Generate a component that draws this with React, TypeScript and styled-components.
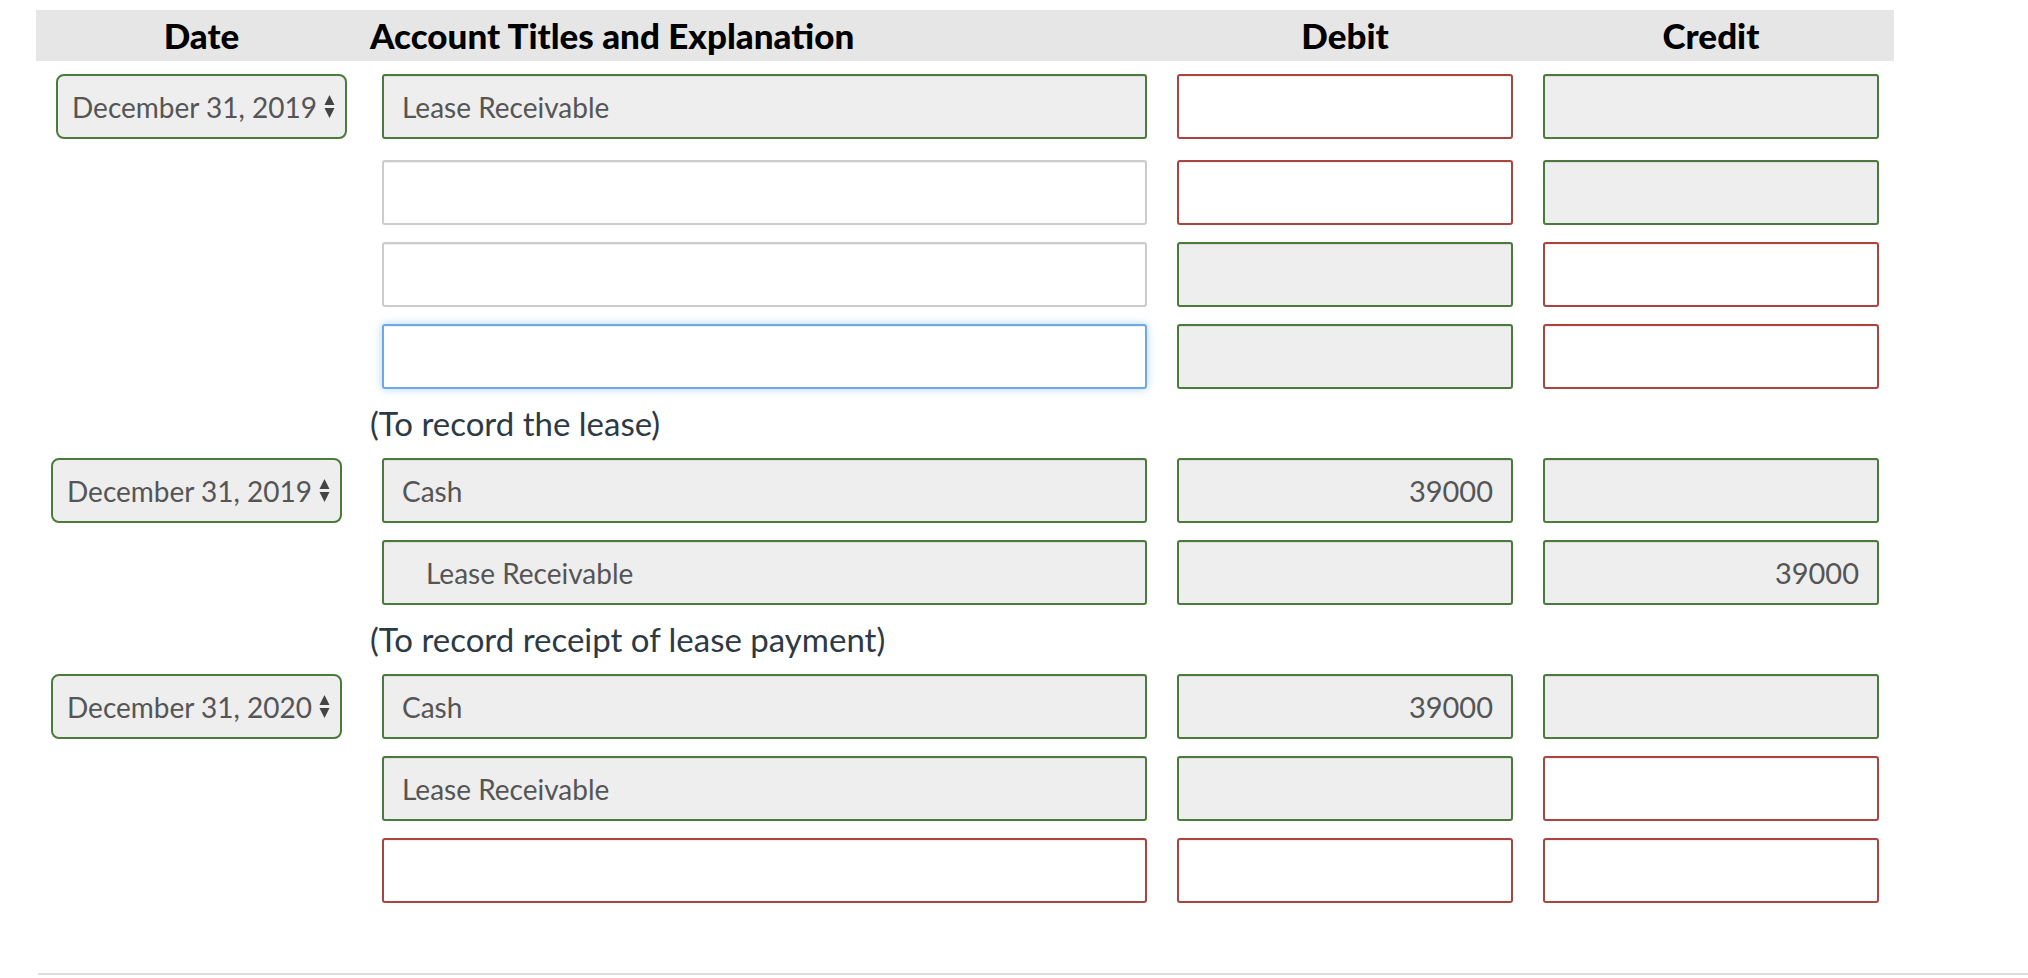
import React from 'react';
import styled, { createGlobalStyle, css } from 'styled-components';

// Journal entry worksheet: a grey header band, then entries made of rows of
// account / debit / credit fields, each marked by its check state.

type State = 'ok' | 'bad' | 'plain' | 'focus';

interface Line {
  account?: string;
  indent?: boolean;
  acct: State;
  debit: State;
  credit: State;
  debitValue?: string;
  creditValue?: string;
}

interface Entry {
  date: string;
  shift: number;
  lines: Line[];
  note?: string;
}

const GlobalStyle = createGlobalStyle`
  html, body {
    margin: 0;
    padding: 0;
    background: #ffffff;
  }
  body {
    font-family: Lato, "Open Sans", "Liberation Sans", sans-serif;
  }
`;

const Page = styled.div`
  padding: 10px 0 0 36px;
`;

const columns = css`
  display: grid;
  grid-template-columns: 316px 765px 336px 336px;
  column-gap: 30px;
`;

const HeaderBar = styled.div`
  ${columns};
  width: 1843px;
  padding-right: 15px;
  height: 51px;
  background: #e6e6e6;
  align-items: center;
`;

const HeadCell = styled.div<{ $align?: 'left' | 'center' }>`
  font-size: 35px;
  font-weight: 900;
  line-height: 51px;
  color: #000;
  white-space: nowrap;
  text-align: ${(p) => p.$align ?? 'center'};
  ${(p) =>
    p.$align === 'left'
      ? css`
          margin-left: -12px;
        `
      : ''}
`;

const DateHead = styled(HeadCell)`
  padding: 0 0 0 20px;
  width: 291px;
`;

const Body = styled.div`
  padding-top: 13px;
`;

const Row = styled.div<{ $extra?: number }>`
  ${columns};
  height: 65px;
  margin-bottom: ${(p) => 17 + (p.$extra ?? 0)}px;
`;

const Note = styled.div`
  ${columns};
  height: 52px;
`;

const NoteText = styled.div`
  grid-column: 2 / span 3;
  margin-left: -12px;
  font-size: 33px;
  line-height: 34px;
  color: #2d3a45;
`;

const stateStyle = {
  ok: css`
    border-color: #4a7b3d;
    background: #eeeeee;
  `,
  bad: css`
    border-color: #a9443f;
    background: #ffffff;
  `,
  plain: css`
    border-color: #cccccc;
    background: #ffffff;
  `,
  focus: css`
    border-color: #6ea8e5;
    background: #ffffff;
    box-shadow: inset 0 1px 1px rgba(0, 0, 0, 0.075), 0 0 9px rgba(102, 175, 233, 0.55);
  `,
};

const Field = styled.input<{ $state: State; $indent?: boolean; $num?: boolean }>`
  box-sizing: border-box;
  width: 100%;
  height: 65px;
  margin: 0;
  border: 2px solid;
  border-radius: 3px;
  outline: none;
  box-shadow: inset 0 1px 1px rgba(0, 0, 0, 0.075);
  padding: 0 ${(p) => (p.$num ? '18px' : '12px')} 0 ${(p) => (p.$indent ? '42px' : '18px')};
  font-family: Lato, "Open Sans", "Liberation Sans", sans-serif;
  font-size: ${(p) => (p.$num ? '29px' : '28px')};
  color: #555555;
  text-align: ${(p) => (p.$num ? 'right' : 'left')};
  ${(p) => stateStyle[p.$state]};
`;

const SelectBox = styled.div<{ $shift: number }>`
  box-sizing: border-box;
  width: 291px;
  height: 65px;
  margin-left: ${(p) => p.$shift}px;
  display: flex;
  align-items: center;
  justify-content: space-between;
  padding: 0 10px 0 14px;
  border: 2px solid #4a7b3d;
  border-radius: 8px;
  background: #eeeeee;
  font-size: 28px;
  color: #555555;
`;

const Arrows = () => (
  <svg width="11" height="25" viewBox="0 0 11 25" aria-hidden="true">
    <path d="M5.5 1 L10.5 11 L0.5 11 Z" fill="#444" />
    <path d="M0.5 14 L10.5 14 L5.5 24 Z" fill="#444" />
  </svg>
);

const Divider = styled.div`
  margin: 70px 0 0 2px;
  height: 2px;
  background: #dddddd;
`;

const entries: Entry[] = [
  {
    date: 'December 31, 2019',
    shift: 20,
    note: '(To record the lease)',
    lines: [
      { account: 'Lease Receivable', acct: 'ok', debit: 'bad', credit: 'ok' },
      { acct: 'plain', debit: 'bad', credit: 'ok' },
      { acct: 'plain', debit: 'ok', credit: 'bad' },
      { acct: 'focus', debit: 'ok', credit: 'bad' },
    ],
  },
  {
    date: 'December 31, 2019',
    shift: 15,
    note: '(To record receipt of lease payment)',
    lines: [
      { account: 'Cash', acct: 'ok', debit: 'ok', credit: 'ok', debitValue: '39000' },
      {
        account: 'Lease Receivable',
        indent: true,
        acct: 'ok',
        debit: 'ok',
        credit: 'ok',
        creditValue: '39000',
      },
    ],
  },
  {
    date: 'December 31, 2020',
    shift: 15,
    lines: [
      { account: 'Cash', acct: 'ok', debit: 'ok', credit: 'ok', debitValue: '39000' },
      { account: 'Lease Receivable', acct: 'ok', debit: 'ok', credit: 'bad' },
      { acct: 'bad', debit: 'bad', credit: 'bad' },
    ],
  },
];

const App: React.FC = () => (
  <>
    <GlobalStyle />
    <Page>
      <HeaderBar>
        <DateHead>Date</DateHead>
        <HeadCell $align="left">Account Titles and Explanation</HeadCell>
        <HeadCell>Debit</HeadCell>
        <HeadCell>Credit</HeadCell>
      </HeaderBar>
      <Body>
        {entries.map((entry, ei) => (
          <React.Fragment key={ei}>
            {entry.lines.map((line, li) => (
              <Row key={li} $extra={ei === 0 && li === 0 ? 4 : 0}>
                <div>
                  {li === 0 && (
                    <SelectBox $shift={entry.shift}>
                      <span>{entry.date}</span>
                      <Arrows />
                    </SelectBox>
                  )}
                </div>
                <Field
                  readOnly
                  value={line.account ?? ''}
                  $state={line.acct}
                  $indent={line.indent}
                />
                <Field readOnly value={line.debitValue ?? ''} $state={line.debit} $num />
                <Field readOnly value={line.creditValue ?? ''} $state={line.credit} $num />
              </Row>
            ))}
            {entry.note && (
              <Note>
                <NoteText>{entry.note}</NoteText>
              </Note>
            )}
          </React.Fragment>
        ))}
      </Body>
      <Divider />
    </Page>
  </>
);

export default App;
